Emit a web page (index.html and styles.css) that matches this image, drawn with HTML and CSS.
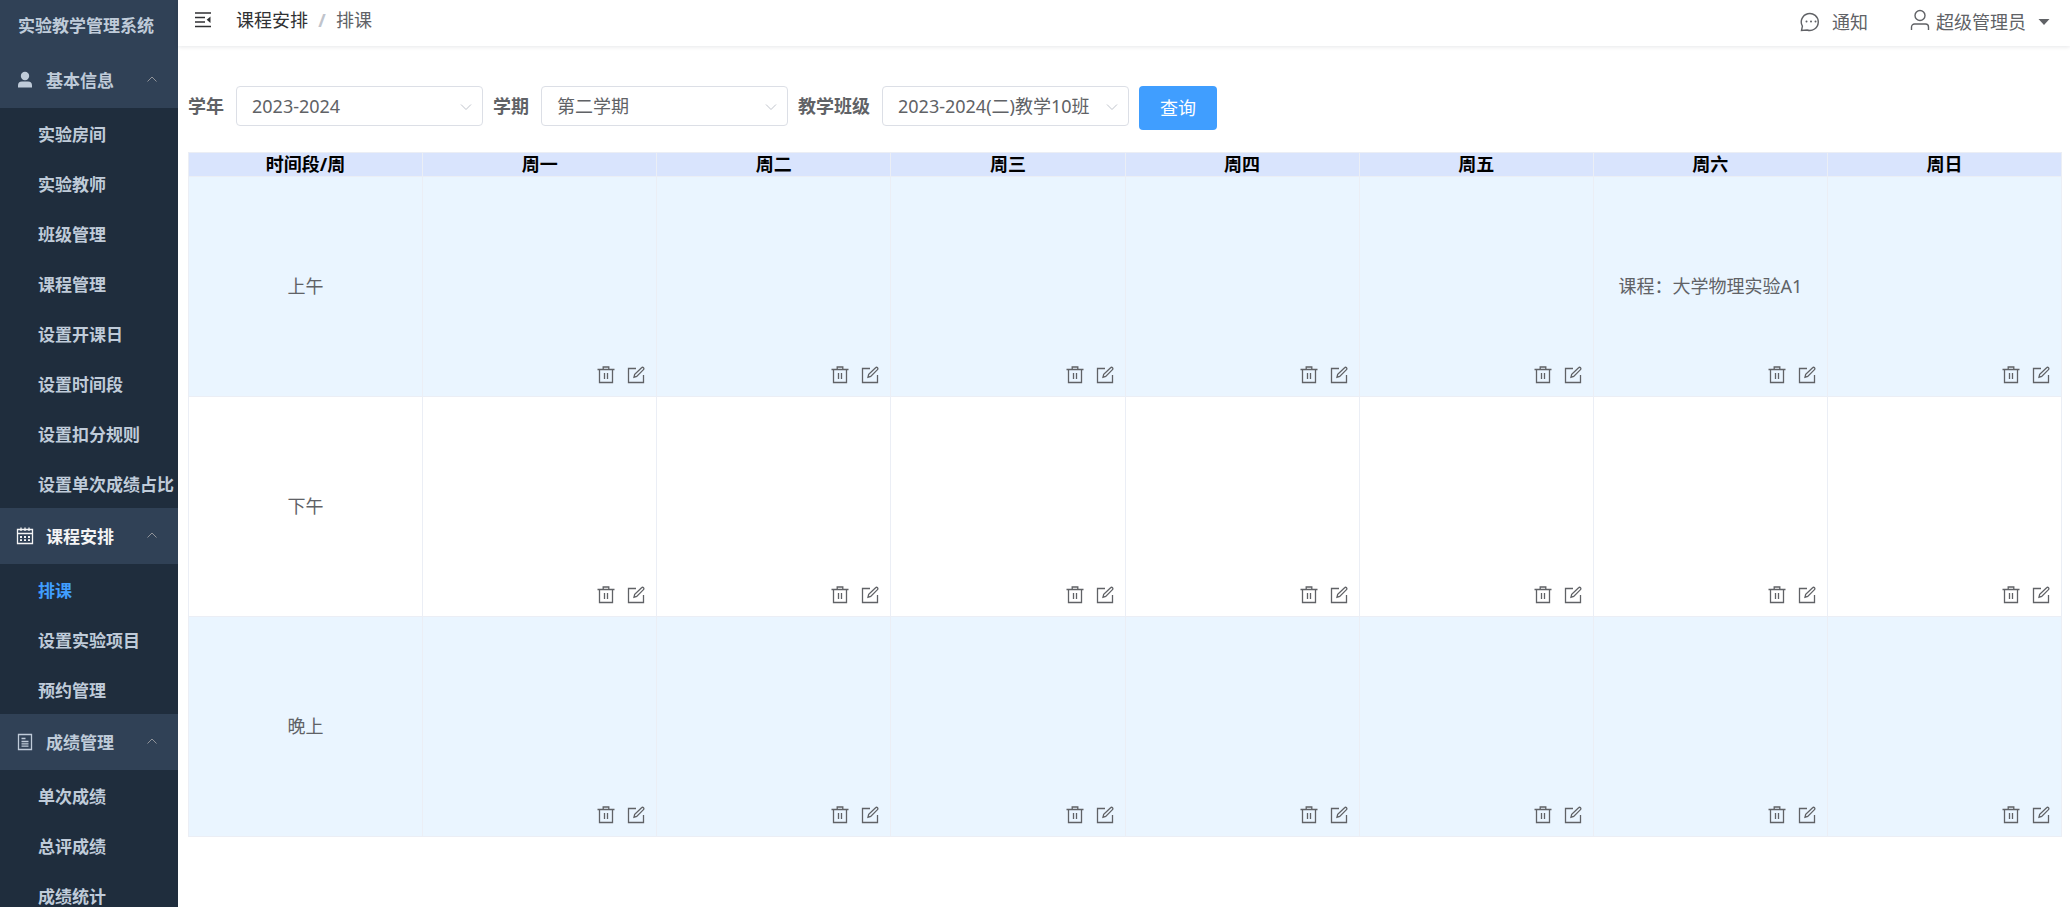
FILE: index.html
```html
<!DOCTYPE html>
<html lang="zh-CN">
<head>
<meta charset="utf-8">
<title>实验教学管理系统</title>
<link rel="stylesheet" href="styles.css">
</head>
<body>
<svg class="sprite" aria-hidden="true">
  <symbol id="i-trash" viewBox="0 0 18 18"><path d="M.5 3.5h17M6.2 3.2V1h5.6v2.2M2.5 3.5v13h13v-13M7.500 7v6M10.500 7v6"/></symbol>
  <symbol id="i-edit" viewBox="0 0 18 18"><path d="M9 2.5H1.5v14h15V9M7 11.2l.7-2.9 6.9-6.6a1.3 1.3 0 0 1 1.9 1.9L9.7 10.400z"/></symbol>
  <symbol id="i-up" viewBox="0 0 12 8"><path d="M1.500 6.500 6 2l4.500 4.500"/></symbol>
  <symbol id="i-down" viewBox="0 0 12 8"><path d="M1 1.500l5 5 5-5"/></symbol>
</svg>
<div class="app">
  <aside class="sidebar">
    <h1 class="brand">实验教学管理系统</h1>
    <nav>
      <button class="group" type="button">
        <svg class="group-icon solid" viewBox="0 0 18 18"><circle cx="9" cy="5" r="4.200"/><path d="M2 16.500v-2a4 4 0 0 1 4-4h6a4 4 0 0 1 4 4v2z"/></svg>
        <span>基本信息</span><svg class="fold"><use href="#i-up"/></svg>
      </button>
      <ul class="menu">
        <li><a href="#">实验房间</a></li>
        <li><a href="#">实验教师</a></li>
        <li><a href="#">班级管理</a></li>
        <li><a href="#">课程管理</a></li>
        <li><a href="#">设置开课日</a></li>
        <li><a href="#">设置时间段</a></li>
        <li><a href="#">设置扣分规则</a></li>
        <li><a href="#">设置单次成绩占比</a></li>
      </ul>
      <button class="group current" type="button">
        <svg class="group-icon" viewBox="0 0 18 18"><path d="M1.500 2.500h15v14h-15zM1.500 6.500h15M5 .5v3.500M9 .5v3.500M13 .5v3.500"/><path d="M4 10h2M8 10h2M12 10h2M4 13.200h2M8 13.200h2M12 13.200h2" stroke-width="1.800"/></svg>
        <span>课程安排</span><svg class="fold"><use href="#i-up"/></svg>
      </button>
      <ul class="menu">
        <li><a class="active" href="#">排课</a></li>
        <li><a href="#">设置实验项目</a></li>
        <li><a href="#">预约管理</a></li>
      </ul>
      <button class="group" type="button">
        <svg class="group-icon" viewBox="0 0 18 18"><path d="M2.500 1.500h13v15h-13zM5.500 5.500h4M5.500 8.500h7M5.500 10.800h7M5.500 13.200h7"/></svg>
        <span>成绩管理</span><svg class="fold"><use href="#i-up"/></svg>
      </button>
      <ul class="menu">
        <li><a href="#">单次成绩</a></li>
        <li><a href="#">总评成绩</a></li>
        <li><a href="#">成绩统计</a></li>
      </ul>
    </nav>
  </aside>
  <div class="page">
    <header class="topbar">
      <button class="collapse" type="button" aria-label="收起菜单">
        <svg viewBox="0 0 18 18"><path d="M1 2h16M1 6.500h10M1 11h10M1 15.500h16"/><path class="arrow" d="M16.500 5.500v6.500l-3.800-3.200z"/></svg>
      </button>
      <nav class="crumbs"><a href="#">课程安排</a><span class="slash">/</span><span>排课</span></nav>
      <div class="account">
        <button class="notice" type="button">
          <svg class="chat" viewBox="0 0 22 20"><path d="M1.500 18.500l.9-4.300A8.500 8.500 0 1 1 7 18z"/><path class="dots" d="M6.500 9.500h.01M11 9.500h.01M15.500 9.500h.01"/></svg>
          <span>通知</span>
        </button>
        <button class="user" type="button">
          <svg class="person" viewBox="0 0 20 22"><circle cx="10" cy="6.500" r="5"/><path d="M1.500 21v-3a3 3 0 0 1 3-3h11a3 3 0 0 1 3 3v3"/></svg>
          <span>超级管理员</span>
          <svg class="caret" viewBox="0 0 12 8"><path d="M.5 1h11L6 7z"/></svg>
        </button>
      </div>
    </header>
    <main class="content">
      <form class="filters">
        <label for="year">学年</label>
        <span class="picker"><select id="year"><option>2023-2024</option></select><svg><use href="#i-down"/></svg></span>
        <label for="term">学期</label>
        <span class="picker"><select id="term"><option>第二学期</option></select><svg><use href="#i-down"/></svg></span>
        <label for="class">教学班级</label>
        <span class="picker"><select id="class"><option>2023-2024(二)教学10班</option></select><svg><use href="#i-down"/></svg></span>
        <button class="query" type="button">查询</button>
      </form>
      <table class="schedule">
        <thead>
          <tr><th>时间段/周</th><th>周一</th><th>周二</th><th>周三</th><th>周四</th><th>周五</th><th>周六</th><th>周日</th></tr>
        </thead>
        <tbody>
          <tr>
            <td><div class="slot"><span class="course">上午</span></div></td>
            <td><div class="slot"><div class="tools"><button type="button" aria-label="删除"><svg><use href="#i-trash"/></svg></button><button type="button" aria-label="编辑"><svg><use href="#i-edit"/></svg></button></div></div></td>
            <td><div class="slot"><div class="tools"><button type="button" aria-label="删除"><svg><use href="#i-trash"/></svg></button><button type="button" aria-label="编辑"><svg><use href="#i-edit"/></svg></button></div></div></td>
            <td><div class="slot"><div class="tools"><button type="button" aria-label="删除"><svg><use href="#i-trash"/></svg></button><button type="button" aria-label="编辑"><svg><use href="#i-edit"/></svg></button></div></div></td>
            <td><div class="slot"><div class="tools"><button type="button" aria-label="删除"><svg><use href="#i-trash"/></svg></button><button type="button" aria-label="编辑"><svg><use href="#i-edit"/></svg></button></div></div></td>
            <td><div class="slot"><div class="tools"><button type="button" aria-label="删除"><svg><use href="#i-trash"/></svg></button><button type="button" aria-label="编辑"><svg><use href="#i-edit"/></svg></button></div></div></td>
            <td><div class="slot"><span class="course">课程：大学物理实验A1</span><div class="tools"><button type="button" aria-label="删除"><svg><use href="#i-trash"/></svg></button><button type="button" aria-label="编辑"><svg><use href="#i-edit"/></svg></button></div></div></td>
            <td><div class="slot"><div class="tools"><button type="button" aria-label="删除"><svg><use href="#i-trash"/></svg></button><button type="button" aria-label="编辑"><svg><use href="#i-edit"/></svg></button></div></div></td>
          </tr>
          <tr>
            <td><div class="slot"><span class="course">下午</span></div></td>
            <td><div class="slot"><div class="tools"><button type="button" aria-label="删除"><svg><use href="#i-trash"/></svg></button><button type="button" aria-label="编辑"><svg><use href="#i-edit"/></svg></button></div></div></td>
            <td><div class="slot"><div class="tools"><button type="button" aria-label="删除"><svg><use href="#i-trash"/></svg></button><button type="button" aria-label="编辑"><svg><use href="#i-edit"/></svg></button></div></div></td>
            <td><div class="slot"><div class="tools"><button type="button" aria-label="删除"><svg><use href="#i-trash"/></svg></button><button type="button" aria-label="编辑"><svg><use href="#i-edit"/></svg></button></div></div></td>
            <td><div class="slot"><div class="tools"><button type="button" aria-label="删除"><svg><use href="#i-trash"/></svg></button><button type="button" aria-label="编辑"><svg><use href="#i-edit"/></svg></button></div></div></td>
            <td><div class="slot"><div class="tools"><button type="button" aria-label="删除"><svg><use href="#i-trash"/></svg></button><button type="button" aria-label="编辑"><svg><use href="#i-edit"/></svg></button></div></div></td>
            <td><div class="slot"><div class="tools"><button type="button" aria-label="删除"><svg><use href="#i-trash"/></svg></button><button type="button" aria-label="编辑"><svg><use href="#i-edit"/></svg></button></div></div></td>
            <td><div class="slot"><div class="tools"><button type="button" aria-label="删除"><svg><use href="#i-trash"/></svg></button><button type="button" aria-label="编辑"><svg><use href="#i-edit"/></svg></button></div></div></td>
          </tr>
          <tr>
            <td><div class="slot"><span class="course">晚上</span></div></td>
            <td><div class="slot"><div class="tools"><button type="button" aria-label="删除"><svg><use href="#i-trash"/></svg></button><button type="button" aria-label="编辑"><svg><use href="#i-edit"/></svg></button></div></div></td>
            <td><div class="slot"><div class="tools"><button type="button" aria-label="删除"><svg><use href="#i-trash"/></svg></button><button type="button" aria-label="编辑"><svg><use href="#i-edit"/></svg></button></div></div></td>
            <td><div class="slot"><div class="tools"><button type="button" aria-label="删除"><svg><use href="#i-trash"/></svg></button><button type="button" aria-label="编辑"><svg><use href="#i-edit"/></svg></button></div></div></td>
            <td><div class="slot"><div class="tools"><button type="button" aria-label="删除"><svg><use href="#i-trash"/></svg></button><button type="button" aria-label="编辑"><svg><use href="#i-edit"/></svg></button></div></div></td>
            <td><div class="slot"><div class="tools"><button type="button" aria-label="删除"><svg><use href="#i-trash"/></svg></button><button type="button" aria-label="编辑"><svg><use href="#i-edit"/></svg></button></div></div></td>
            <td><div class="slot"><div class="tools"><button type="button" aria-label="删除"><svg><use href="#i-trash"/></svg></button><button type="button" aria-label="编辑"><svg><use href="#i-edit"/></svg></button></div></div></td>
            <td><div class="slot"><div class="tools"><button type="button" aria-label="删除"><svg><use href="#i-trash"/></svg></button><button type="button" aria-label="编辑"><svg><use href="#i-edit"/></svg></button></div></div></td>
          </tr>
        </tbody>
      </table>
    </main>
  </div>
</div>
</body>
</html>
```
FILE: styles.css
```css
* { box-sizing: border-box; }
body {
  margin: 0;
  overflow: hidden;
  background: #fff;
  color: #606266;
  font: 400 18px/24px "Noto Sans", "Noto Sans CJK SC", sans-serif;
}
button {
  padding: 0;
  border: 0;
  background: none;
  color: inherit;
  font: inherit;
  cursor: pointer;
}
a { color: inherit; text-decoration: none; }
svg { display: block; fill: none; stroke: currentColor; }
.sprite { position: absolute; width: 0; height: 0; }
.app { display: flex; height: 100vh; }

.sidebar {
  flex: 0 0 178px;
  overflow: hidden;
  background: #304156;
  color: #bfcbd9;
  font-size: 17px;
  font-weight: 700;
}
.brand {
  margin: 0;
  padding-right: 6px;
  font-size: 17px;
  line-height: 52px;
  text-align: center;
  white-space: nowrap;
}
.group {
  display: flex;
  align-items: center;
  width: 100%;
  height: 56px;
  padding: 2px 20px 0 16px;
}
.group.current { color: #f4f4f5; }
.group-icon { width: 18px; height: 18px; margin-right: 12px; margin-bottom: 2px; stroke-width: 1.3; }
.group-icon.solid { fill: currentColor; stroke: none; }
.fold { width: 12px; height: 8px; margin-left: auto; margin-bottom: 4px; color: #909399; }
.menu { margin: 0; padding: 0; list-style: none; background: #1f2d3d; }
.menu a { display: block; height: 50px; padding: 2px 0 0 38px; line-height: 50px; white-space: nowrap; }
.menu .active { color: #409eff; }

.page { flex: 1; min-width: 0; }
.topbar {
  display: flex;
  align-items: center;
  height: 46px;
  padding: 0 20px 6px 16px;
  box-shadow: 0 1px 4px rgba(0, 21, 41, 0.1);
}
.collapse { margin-right: 24px; color: #303133; }
.collapse svg { width: 18px; height: 18px; stroke-width: 1.6; }
.collapse .arrow { fill: currentColor; stroke: none; }
.crumbs { display: flex; }
.crumbs a { color: #303133; }
.slash { width: 28px; color: #c0c4cc; font-weight: 700; text-align: center; }
.account { display: flex; gap: 42px; margin-left: auto; padding-top: 4px; }
.notice, .user { display: flex; align-items: center; }
.chat { width: 22px; height: 20px; margin-right: 10px; stroke-width: 1.4; }
.chat .dots { stroke-width: 2; stroke-linecap: round; }
.person { width: 20px; height: 22px; margin-right: 6px; margin-bottom: 4px; stroke-width: 1.4; }
.caret { width: 12px; height: 8px; margin-left: 12px; fill: currentColor; stroke: none; }

.content { padding: 40px 8px 0 10px; }
.filters { display: flex; align-items: flex-start; }
.filters label { margin-right: 12px; font-weight: 700; line-height: 40px; }
.picker { display: grid; width: 247px; margin-right: 10px; }
.picker select {
  grid-area: 1 / 1;
  width: 100%;
  height: 40px;
  padding: 0 30px 0 15px;
  border: 1px solid #dcdfe6;
  border-radius: 4px;
  background: #fff;
  color: inherit;
  font: inherit;
  appearance: none;
}
.picker svg {
  grid-area: 1 / 1;
  place-self: center end;
  width: 12px;
  height: 8px;
  margin-top: 2px;
  margin-right: 11px;
  color: #c0c4cc;
  pointer-events: none;
}
.query {
  height: 44px;
  padding: 0 21px;
  border-radius: 4px;
  background: #409eff;
  color: #fff;
}

.schedule {
  width: 100%;
  margin-top: 22px;
  border-collapse: collapse;
  table-layout: fixed;
}
.schedule th, .schedule td { padding: 0; border: 1px solid #ebeef5; text-align: center; }
.schedule th { background: #d9e4fd; color: #000; font-weight: 700; line-height: 23px; }
.schedule tbody tr:nth-child(odd) { background: #eaf5ff; }
.slot { display: grid; grid-template-rows: 1fr auto 1fr; height: 219px; }
.course { grid-row: 2; padding-bottom: 2px; }
.tools {
  grid-row: 3;
  display: flex;
  align-self: end;
  justify-content: flex-end;
  gap: 12px;
  padding: 0 11px 12px 0;
}
.tools svg { width: 18px; height: 18px; stroke-width: 1.3; }
```
